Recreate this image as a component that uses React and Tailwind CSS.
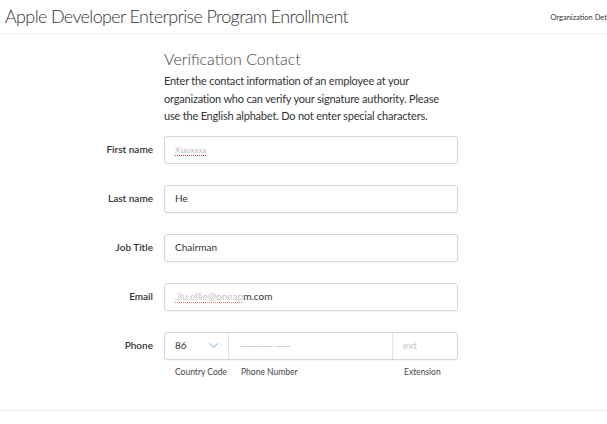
import { ChevronDown } from "lucide-react";

const Field = ({ label, children }) => (
    <div className="flex items-center">
        <div className="w-[153px] pr-0 text-right text-[10px] font-semibold text-[#333]">{label}</div>
        <div className="ml-[11px] w-[294px]">{children}</div>
    </div>
);

const Input = ({ children }) => (
    <div className="flex h-[28px] items-center rounded-[3px] border border-[#d6d6d6] bg-white px-[10px] text-[10px] text-[#333] shadow-[0_1px_1px_rgba(0,0,0,0.04)]">
        {children}
    </div>
);

export default function App() {
    return (
        <div className="min-h-[424px] w-[607px] overflow-hidden bg-white text-[#333]" style={{ fontFamily: "Lato, 'Open Sans', sans-serif" }}>

            {/* Header */}
            <div className="flex h-[34px] items-center justify-between border-b border-[#ececec] pl-[5px] pr-0">
                <h1 className="whitespace-nowrap text-[18px] font-light tracking-[-0.65px] text-[#333]">
                    Apple Developer Enterprise Program Enrollment
                </h1>
                <span className="mt-[2px] whitespace-nowrap text-[7.5px] text-[#333]">Organization Det</span>
            </div>

            {/* Intro */}
            <div className="ml-[164px] mt-[14px] w-[330px]">
                <h2 className="text-[16px] font-light leading-[22px] text-[#444]">Verification Contact</h2>
                <p className="mt-[2px] whitespace-nowrap text-[11px] leading-[17.5px] tracking-[-0.2px] text-[#333]">
                    Enter the contact information of an employee at your<br />
                    organization who can verify your signature authority. Please<br />
                    use the English alphabet. Do not enter special characters.
                </p>
            </div>

            {/* Form */}
            <div className="mt-[11px] flex flex-col gap-[21px]">
                <Field label="First name">
                    <Input>
                        <span className="text-[8px] leading-none text-[#bbb] underline decoration-red-500 decoration-dotted underline-offset-2">Xiaoxxxx</span>
                    </Input>
                </Field>
                <Field label="Last name">
                    <Input>He</Input>
                </Field>
                <Field label="Job Title">
                    <Input>Chairman</Input>
                </Field>
                <Field label="Email">
                    <Input>
                        <span className="text-[#c4c4c4] underline decoration-red-400 decoration-dotted underline-offset-2">.ilu.ellie@oneap</span>
                        <span>m.com</span>
                    </Input>
                </Field>
                <div>
                    <Field label="Phone">
                        <div className="flex h-[28px] rounded-[3px] border border-[#d6d6d6] text-[10px] shadow-[0_1px_1px_rgba(0,0,0,0.04)]">
                            <div className="flex w-[64px] items-center justify-between border-r border-[#e2e2e2] pl-[10px] pr-[7px]">
                                <span>86</span>
                                <ChevronDown size={15} strokeWidth={1.25} className="text-[#3b8fd6]" />
                            </div>
                            <div className="flex flex-1 items-center pl-[11px] text-[#bbb] tracking-[-0.5px]">
                                ---------- -----
                            </div>
                            <div className="flex w-[65px] items-center border-l border-[#e2e2e2] pl-[10px] text-[#c4c4c4]">ext</div>
                        </div>
                    </Field>
                    <div className="ml-[164px] mt-[6px] flex w-[294px] text-[8.5px] text-[#444]">
                        <span className="w-[66px] pl-[11px] whitespace-nowrap">Country Code</span>
                        <span className="flex-1 pl-[11px]">Phone Number</span>
                        <span className="w-[65px] pl-[11px]">Extension</span>
                    </div>
                </div>
            </div>

            <div className="mt-[32px] border-t border-[#ececec]" />
        </div>
    );
}
